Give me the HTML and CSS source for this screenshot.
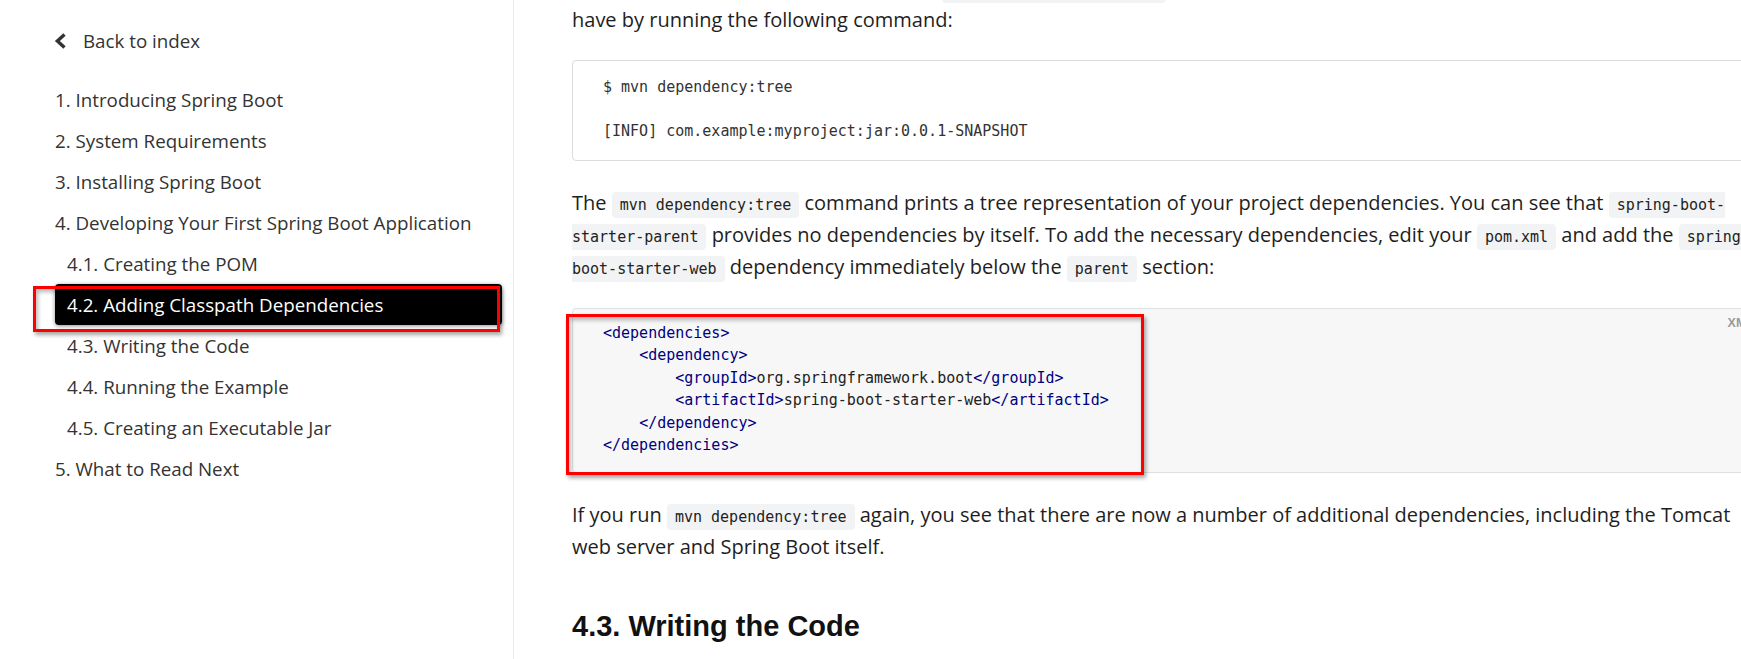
FILE: index.html
```html
<!DOCTYPE html>
<html lang="en">
<head>
<meta charset="utf-8">
<title>Adding Classpath Dependencies</title>
<link rel="stylesheet" href="styles.css">
</head>
<body>
<div class="page">
  <aside class="sidebar">
    <a class="back" href="#">
      <svg class="chev" width="14" height="16" viewBox="0 0 14 16" aria-hidden="true">
        <polyline points="11.5,1.6 4.4,8 11.5,14.4" fill="none" stroke="#333" stroke-width="3.4" stroke-linejoin="miter"/>
      </svg>
      <span>Back to index</span>
    </a>
    <ul class="toc">
      <li><a href="#">1. Introducing Spring Boot</a></li>
      <li><a href="#">2. System Requirements</a></li>
      <li><a href="#">3. Installing Spring Boot</a></li>
      <li><a href="#">4. Developing Your First Spring Boot Application</a>
        <ul class="sub">
          <li><a href="#">4.1. Creating the POM</a></li>
          <li><a href="#" class="active">4.2. Adding Classpath Dependencies</a></li>
          <li><a href="#">4.3. Writing the Code</a></li>
          <li><a href="#">4.4. Running the Example</a></li>
          <li><a href="#">4.5. Creating an Executable Jar</a></li>
        </ul>
      </li>
      <li><a href="#">5. What to Read Next</a></li>
    </ul>
  </aside>
  <main class="main">
    <div class="content">
      <p class="para lead">developing a web application, we add a <code>spring-boot-starter-web</code> dependency. Before that, we can look at what we currently<br>have by running the following command:</p>
      <pre class="listing">$ mvn dependency:tree

[INFO] com.example:myproject:jar:0.0.1-SNAPSHOT</pre>
      <p class="para p2">The <code>mvn dependency:tree</code> command prints a tree representation of your project dependencies. You can see that <code>spring-boot-<br>starter-parent</code> provides no dependencies by itself. To add the necessary dependencies, edit your <code>pom.xml</code> and add the <code>spring-<br>boot-starter-web</code> dependency immediately below the <code>parent</code> section:</p>
      <div class="listing xml"><span class="lang">XML</span><pre><span class="tag">&lt;dependencies&gt;</span>
    <span class="tag">&lt;dependency&gt;</span>
        <span class="tag">&lt;groupId&gt;</span>org.springframework.boot<span class="tag">&lt;/groupId&gt;</span>
        <span class="tag">&lt;artifactId&gt;</span>spring-boot-starter-web<span class="tag">&lt;/artifactId&gt;</span>
    <span class="tag">&lt;/dependency&gt;</span>
<span class="tag">&lt;/dependencies&gt;</span></pre></div>
      <p class="para p3">If you run <code>mvn dependency:tree</code> again, you see that there are now a number of additional dependencies, including the Tomcat<br>web server and Spring Boot itself.</p>
      <h2 class="heading">4.3. Writing the Code</h2>
    </div>
  </main>
  <div class="mark mark-toc"></div>
  <div class="mark mark-code"></div>
</div>
</body>
</html>
```

FILE: styles.css
```css
html, body {
  margin: 0;
  padding: 0;
  background: #fff;
  overflow: hidden;
}

.page {
  position: relative;
  display: flex;
  width: 1741px;
  height: 659px;
  overflow: hidden;
}

.sidebar {
  box-sizing: border-box;
  width: 514px;
  flex: none;
  height: 100%;
  border-right: 1px solid #e7eaec;
  padding: 20px 11px 0 55px;
  font-family: "Open Sans", "Noto Sans", sans-serif;
  font-size: 18.75px;
  color: #333;
}

.sidebar a {
  color: inherit;
  text-decoration: none;
}

.back {
  display: flex;
  align-items: center;
  height: 41px;
  margin-left: -2px;
  gap: 16px;
}

.chev {
  display: block;
  flex: none;
}

.toc, .sub {
  list-style: none;
  margin: 0;
  padding: 0;
}

.toc {
  margin-top: 18px;
}

.toc a {
  display: block;
  height: 41px;
  line-height: 41px;
  white-space: nowrap;
}

.sub a {
  padding-left: 12px;
  border-radius: 4px;
}

.sub a.active {
  background: #000;
  color: #fff;
  box-shadow: 0 1px 4px rgba(0, 0, 0, 0.45);
}

.main {
  flex: 1;
  min-width: 0;
  overflow: hidden;
  padding-left: 58px;
}

.content {
  width: 1200px;
  font-family: "Open Sans", "Noto Sans", sans-serif;
  font-size: 20px;
  line-height: 32px;
  color: #1e1e1e;
}

.para {
  margin: 26px 0 0;
  white-space: nowrap;
}

.para.lead {
  margin-top: -28px;
}

code {
  font-family: "DejaVu Sans Mono", monospace;
  font-size: 15px;
  line-height: 1;
  background: #f2f3f4;
  border-radius: 4px;
  padding: 4px 8px;
  color: #222;
}

.listing {
  box-sizing: border-box;
  margin: 24px 0 0;
  border: 1px solid #dcdcdc;
  border-radius: 4px;
  padding: 15px 30px 18px;
  font-family: "DejaVu Sans Mono", monospace;
  font-size: 15px;
  line-height: 22px;
  color: #333;
  white-space: pre;
}

.listing.xml {
  position: relative;
  margin-top: 25px;
  background: #f7f7f7;
  border-color: #e0e0e0;
  padding: 13px 30px 16px;
  line-height: 22.4px;
  color: #222;
}

.listing.xml pre {
  margin: 0;
  font: inherit;
}

.tag {
  color: #000080;
}

.lang {
  position: absolute;
  top: 7px;
  right: 17px;
  font-family: "Liberation Sans", Arial, sans-serif;
  font-weight: bold;
  font-size: 12.5px;
  line-height: 14px;
  color: #9a9a9a;
}

.heading {
  margin: 46px 0 0;
  font-family: "Liberation Sans", Arial, sans-serif;
  font-weight: bold;
  font-size: 29px;
  line-height: 35px;
  color: #111;
}

.mark {
  position: absolute;
  box-sizing: border-box;
  border: 3px solid #f00;
  box-shadow: 2px 3px 4px rgba(0, 0, 0, 0.35), inset 2px 3px 4px rgba(0, 0, 0, 0.28);
  pointer-events: none;
}

.mark-toc {
  left: 33px;
  top: 286px;
  width: 467px;
  height: 46px;
}

.mark-code {
  left: 566px;
  top: 314px;
  width: 578px;
  height: 161px;
}
```
